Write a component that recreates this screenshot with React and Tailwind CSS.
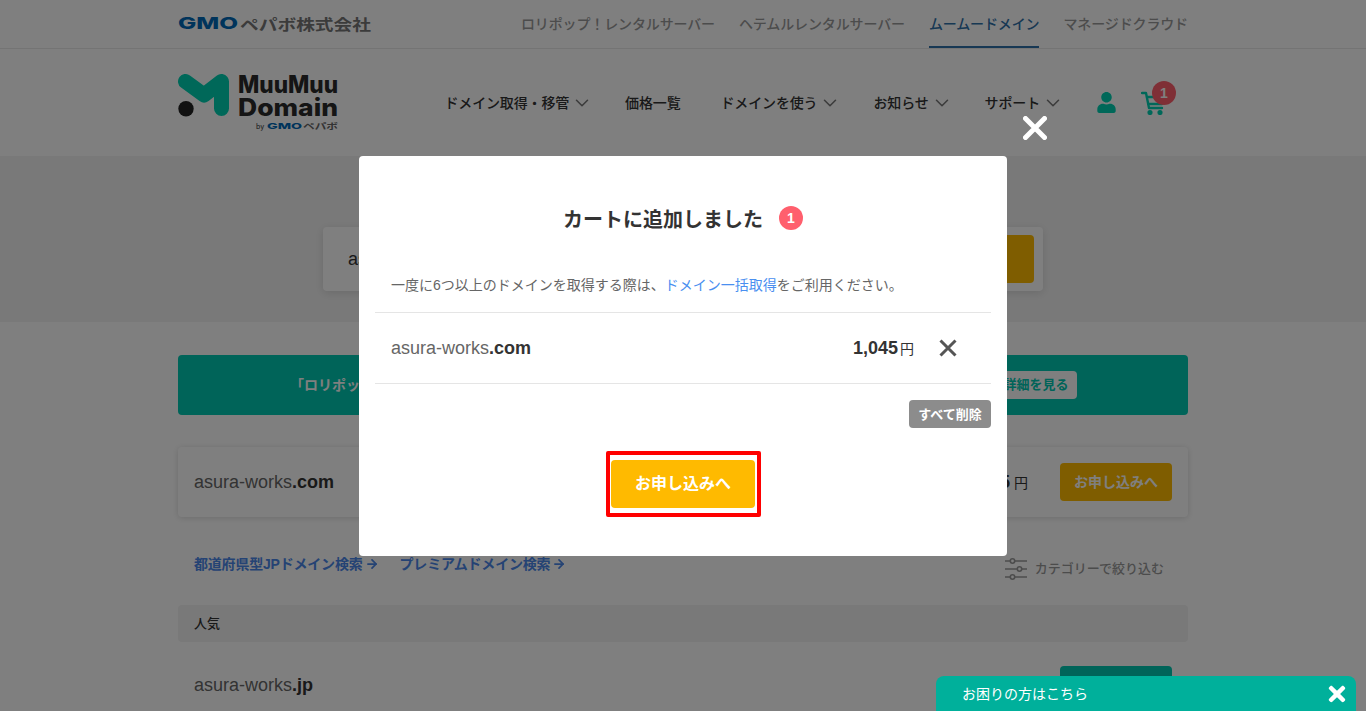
import { ChevronDown, ArrowRight } from 'lucide-react'
import { FaUser, FaTimes } from 'react-icons/fa'

const topLinks = [
  { label: 'ロリポップ！レンタルサーバー' },
  { label: 'ヘテムルレンタルサーバー' },
  { label: 'ムームードメイン', active: true },
  { label: 'マネージドクラウド' },
]

const mainLinks = [
  { label: 'ドメイン取得・移管', arrow: true },
  { label: '価格一覧' },
  { label: 'ドメインを使う', arrow: true },
  { label: 'お知らせ', arrow: true },
  { label: 'サポート', arrow: true },
]

function GmoLogo() {
  return (
    <svg width="194" height="18" viewBox="0 0 194 18">
      <text x="0" y="14" fontFamily="Inter" fontWeight="800" fontSize="16" fill="#0068b7" textLength="60" lengthAdjust="spacingAndGlyphs">GMO</text>
      <text x="62" y="14.5" fontFamily="Noto Sans CJK JP" fontWeight="700" fontSize="15" fill="#777" textLength="131" lengthAdjust="spacingAndGlyphs">ペパボ株式会社</text>
    </svg>
  )
}

function MuuLogo() {
  return (
    <svg width="162" height="58" viewBox="0 0 162 58">
      <path d="M7.5 7.5 L26 21 L43.5 7.5 V34.5" fill="none" stroke="#00d1b2" strokeWidth="15" strokeLinecap="round" strokeLinejoin="round" />
      <circle cx="8" cy="34.7" r="7.7" fill="#222" />
      <text x="60" y="19" fontFamily="Inter" fontWeight="800" fontSize="24" fill="#2a2a2a" textLength="100" lengthAdjust="spacingAndGlyphs">MuuMuu</text>
      <text x="60" y="42" fontFamily="Inter" fontWeight="800" fontSize="24" fill="#2a2a2a" textLength="100" lengthAdjust="spacingAndGlyphs">Domain</text>
      <text x="78" y="55" fontFamily="Inter" fontWeight="500" fontSize="7" fill="#555">by</text>
      <text x="89" y="55" fontFamily="Inter" fontWeight="800" fontSize="8" fill="#0068b7" textLength="35" lengthAdjust="spacingAndGlyphs">GMO</text>
      <text x="125" y="55" fontFamily="Noto Sans CJK JP" fontWeight="700" fontSize="8" fill="#666" textLength="35" lengthAdjust="spacingAndGlyphs">ペパボ</text>
    </svg>
  )
}

function CartIcon() {
  return (
    <svg width="24" height="24" viewBox="0 0 24 24" fill="none" stroke="#00d1b2" strokeWidth="2.4" strokeLinecap="round" strokeLinejoin="round">
      <path d="M1 2 H5 L8 17 H21" />
      <path d="M6 6 H23 L21 13 H7.5" />
      <circle cx="9" cy="21.5" r="1.4" fill="#00d1b2" />
      <circle cx="19" cy="21.5" r="1.4" fill="#00d1b2" />
    </svg>
  )
}

function FilterIcon() {
  return (
    <svg width="22" height="22" viewBox="0 0 22 22" fill="none" stroke="#999" strokeWidth="1.6">
      <path d="M0 3 H5 M10 3 H22 M0 11 H12 M17 11 H22 M0 19 H5 M10 19 H22" />
      <circle cx="7.5" cy="3" r="2.2" />
      <circle cx="14.5" cy="11" r="2.2" />
      <circle cx="7.5" cy="19" r="2.2" />
    </svg>
  )
}

function Badge({ className }) {
  return (
    <span className={`flex h-6 w-6 items-center justify-center rounded-full bg-[#ff5f6d] text-sm font-bold text-white ${className || ''}`}>1</span>
  )
}

function DomainName({ tld }) {
  return (
    <span className="text-lg text-[#666]">
      asura-works<b className="font-bold text-[#333]">{tld}</b>
    </span>
  )
}

export default function App() {
  return (
    <div className="relative h-[711px] overflow-hidden bg-white text-[#333] [font-family:'Liberation_Sans','Noto_Sans_CJK_JP',sans-serif]">
      {/* Top bar */}
      <div className="h-[49px] border-b border-[#e8e8e8]">
        <div className="mx-auto flex h-12 w-[1010px] items-center justify-between">
          <GmoLogo />
          <div className="flex h-12 gap-6">
            {topLinks.map(l => (
              <div
                key={l.label}
                className={`flex items-center border-b-2 pt-0.5 text-sm font-medium tracking-[-0.13px] ${l.active ? 'border-[#2f70a8] text-[#2f70a8]' : 'border-transparent text-[#999]'}`}
              >
                {l.label}
              </div>
            ))}
          </div>
        </div>
      </div>

      {/* Main nav */}
      <div className="mx-auto flex h-[107px] w-[1010px] items-center justify-between">
        <MuuLogo />
        <div className="mr-[23px] flex items-center">
          <div className="flex items-center gap-[32px]">
            {mainLinks.map(l => (
              <div key={l.label} className={`flex items-center gap-[2px] text-sm font-medium tracking-[-0.15px] text-[#333] ${l.arrow ? '' : 'mr-[8px]'}`}>
                {l.label}
                {l.arrow && <ChevronDown size={22} strokeWidth={1.7} className="text-[#777]" />}
              </div>
            ))}
          </div>
          <FaUser size={21} className="ml-[32px] text-[#00d1b2]" />
          <div className="relative ml-[24px]">
            <CartIcon />
            <Badge className="absolute -right-[11px] -top-[10px]" />
          </div>
        </div>
      </div>

      {/* Search band */}
      <div className="flex h-[166px] justify-center bg-[#f3f3f3] pt-[71px]">
        <div className="flex h-16 w-[720px] items-center justify-between rounded bg-white pl-[25px] pr-[9px] shadow-[0_2px_10px_rgba(0,0,0,0.12)]">
          <span className="text-lg text-[#333]">asura-works</span>
          <div className="h-12 w-[150px] rounded bg-[#ffba00]" />
        </div>
      </div>

      <div className="mx-auto w-[1010px]">
        {/* Campaign banner */}
        <div className="mt-[33px] flex h-[60px] items-center justify-between rounded bg-[#00c8b2] pl-[112px] pr-[111px]">
          <span className="text-sm font-bold text-white">「ロリポップ！」同時申し込みでお得なキャンペーン実施中</span>
          <span className="flex h-7 w-[82px] items-center justify-center rounded bg-white text-[13px] font-bold text-[#00c8b2]">詳細を見る</span>
        </div>

        {/* Searched domain */}
        <div className="mt-8 flex h-[70px] items-center justify-between rounded bg-white pl-4 pr-4 shadow-[0_1px_6px_rgba(0,0,0,0.15)]">
          <DomainName tld=".com" />
          <div className="flex items-center gap-8">
            <span className="text-lg font-bold">1,045<span className="ml-1 text-sm font-normal">円</span></span>
            <span className="flex h-[38px] w-28 items-center justify-center rounded bg-[#ffba00] text-sm font-bold text-white">お申し込みへ</span>
          </div>
        </div>

        {/* Links */}
        <div className="mt-[35px] flex h-[24px] items-center justify-between pl-4 pr-[24px]">
          <div className="flex items-center gap-[21px] text-sm font-bold tracking-[-0.2px] text-[#4a86e8]">
            <span className="flex items-center gap-0.5">都道府県型JPドメイン検索<ArrowRight size={14} strokeWidth={3} /></span>
            <span className="flex items-center gap-0.5">プレミアムドメイン検索<ArrowRight size={14} strokeWidth={3} /></span>
          </div>
          <div className="mt-[10px] flex items-center gap-2 text-[13px] font-medium text-[#999]">
            <FilterIcon />
            カテゴリーで絞り込む
          </div>
        </div>

        {/* Popular */}
        <div className="mt-[29px] flex h-[37px] items-center rounded bg-[#f3f3f3] px-4 text-[13px] font-medium text-[#333]">人気</div>
        <div className="mt-6 flex h-[38px] items-center justify-between pl-4 pr-4">
          <DomainName tld=".jp" />
          <span className="h-[38px] w-28 rounded bg-[#00c8b2]" />
        </div>
      </div>

      {/* Modal overlay */}
      <div className="fixed inset-0 flex justify-center bg-black/50 pt-[156px]">
        <div className="relative h-[400px] w-[648px] rounded bg-white px-4">
          <button className="absolute -right-[40px] -top-[40px]" aria-label="close">
            <svg width="24" height="24" viewBox="0 0 24 24" fill="none" stroke="#fff" strokeWidth="5" strokeLinecap="round" className="block">
              <path d="M2.5 2.5 L21.5 21.5 M21.5 2.5 L2.5 21.5" />
            </svg>
          </button>

          <div className="flex h-[78px] items-end justify-center gap-4">
            <h2 className="text-xl font-bold leading-[28px] text-[#333]">カートに追加しました</h2>
            <Badge className="mb-1" />
          </div>

          <p className="flex h-[78px] items-center px-4 pt-[24px] text-sm text-[#666]">
            一度に6つ以上のドメインを取得する際は、<span className="text-[#4a8ff0]">ドメイン一括取得</span>をご利用ください。
          </p>

          <div className="flex h-[72px] items-center justify-between border-y border-[#e5e5e5] px-4">
            <DomainName tld=".com" />
            <div className="flex items-center">
              <span className="text-lg font-bold text-[#333]">1,045</span>
              <span className="ml-[2px] mt-[2px] text-sm text-[#333]">円</span>
              <svg width="18" height="18" viewBox="0 0 18 18" fill="none" stroke="#555" strokeWidth="3" className="ml-[25px] mr-[18px]">
                <path d="M1.5 1.5 L16.5 16.5 M16.5 1.5 L1.5 16.5" />
              </svg>
            </div>
          </div>

          <div className="mt-4 flex justify-end">
            <span className="flex h-7 w-[82px] items-center justify-center rounded bg-[#8c8c8c] pt-[1px] text-[13px] font-bold text-white">すべて削除</span>
          </div>

          <div className="mt-[23px] flex justify-center">
            <div className="flex h-[66px] w-[155px] items-center justify-center rounded-[2px] border-4 border-[#f00]">
              <span className="flex h-12 w-36 items-center justify-center rounded bg-[#ffba00] text-base font-bold text-white">お申し込みへ</span>
            </div>
          </div>
        </div>
      </div>

      {/* Help tab */}
      <div className="fixed bottom-0 right-[10px] flex h-[35px] w-[420px] items-center justify-between rounded-t-lg bg-[#00b09b] pl-[26px] pr-[7px] text-sm text-white">
        お困りの方はこちら
        <FaTimes size={24} />
      </div>
    </div>
  )
}
